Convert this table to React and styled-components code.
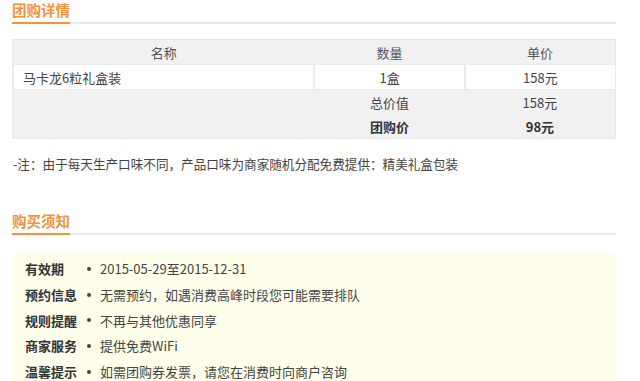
import styled, { createGlobalStyle } from "styled-components";

const GlobalStyle = createGlobalStyle`
  body {
    margin: 0;
    background: #fff;
    font-family: "Noto Sans CJK SC", "Microsoft YaHei", sans-serif;
    color: #333;
  }
`;

const Page = styled.div`
  width: 604px;
  padding-left: 12px;
`;

const SectionHeader = styled.div`
  display: flex;
  border-bottom: 2px solid #e8e8e8;
  margin-top: ${(p) => p.$top || 0}px;
`;

const SectionTitle = styled.h2`
  margin: 0 0 -2px;
  padding: 0 0 2px;
  font-size: 14.5px;
  line-height: 20px;
  font-weight: bold;
  color: #f3923a;
  border-bottom: 2px solid #f3923a;
`;

const Table = styled.table`
  width: 100%;
  margin-top: 15px;
  border-collapse: collapse;
  background: #f1f1f2;
  border: 1px solid #e6e6e6;
  font-size: 13px;
  color: #444;
  table-layout: fixed;
`;

const Th = styled.th`
  height: 24px;
  padding: 0;
  font-weight: normal;
  color: #555;
  text-align: center;
`;

const Td = styled.td`
  height: 24px;
  padding: 0 ${(p) => (p.$left ? "9px" : "0")};
  text-align: ${(p) => (p.$left ? "left" : "center")};
  background: ${(p) => (p.$white ? "#fff" : "transparent")};
  border: ${(p) => (p.$white ? "1px solid #ececec" : "none")};
  border-left-width: ${(p) => (p.$white ? "2px" : "0")};
  font-weight: ${(p) => (p.$bold ? "bold" : "normal")};
  color: ${(p) => (p.$bold ? "#333" : "#444")};
`;

const Note = styled.p`
  margin: 15px 0 0;
  font-size: 12.6px;
  line-height: 20px;
  color: #444;
  padding-left: 1px;
`;

const NoticeBox = styled.div`
  margin-top: 18px;
  background: #fefeeb;
  padding: 3px 13px 0;
`;

const NoticeRow = styled.div`
  display: flex;
  align-items: center;
  height: 25.7px;
  font-size: 13px;
`;

const Label = styled.span`
  width: 58px;
  font-weight: bold;
  color: #333;
`;

const Bullet = styled.span`
  width: 12px;
  display: flex;
  justify-content: center;
  &::before {
    content: "";
    width: 4px;
    height: 4px;
    border-radius: 50%;
    background: #444;
  }
`;

const Value = styled.span`
  margin-left: 5px;
  color: #444;
`;

const notices = [
  ["有效期", "2015-05-29至2015-12-31"],
  ["预约信息", "无需预约，如遇消费高峰时段您可能需要排队"],
  ["规则提醒", "不再与其他优惠同享"],
  ["商家服务", "提供免费WiFi"],
  ["温馨提示", "如需团购券发票，请您在消费时向商户咨询"],
];

export default function App() {
  return (
    <Page>
      <GlobalStyle />
      <SectionHeader>
        <SectionTitle>团购详情</SectionTitle>
      </SectionHeader>
      <Table>
        <colgroup>
          <col style={{ width: "50%" }} />
          <col style={{ width: "25%" }} />
          <col style={{ width: "25%" }} />
        </colgroup>
        <thead>
          <tr>
            <Th>名称</Th>
            <Th>数量</Th>
            <Th>单价</Th>
          </tr>
        </thead>
        <tbody>
          <tr>
            <Td $white $left>
              马卡龙6粒礼盒装
            </Td>
            <Td $white>1盒</Td>
            <Td $white>158元</Td>
          </tr>
          <tr>
            <Td />
            <Td>总价值</Td>
            <Td>158元</Td>
          </tr>
          <tr>
            <Td />
            <Td $bold>团购价</Td>
            <Td $bold>98元</Td>
          </tr>
        </tbody>
      </Table>
      <Note>-注：由于每天生产口味不同，产品口味为商家随机分配免费提供：精美礼盒包装</Note>
      <SectionHeader $top={37}>
        <SectionTitle>购买须知</SectionTitle>
      </SectionHeader>
      <NoticeBox>
        {notices.map(([label, value]) => (
          <NoticeRow key={label}>
            <Label>{label}</Label>
            <Bullet />
            <Value>{value}</Value>
          </NoticeRow>
        ))}
      </NoticeBox>
    </Page>
  );
}
